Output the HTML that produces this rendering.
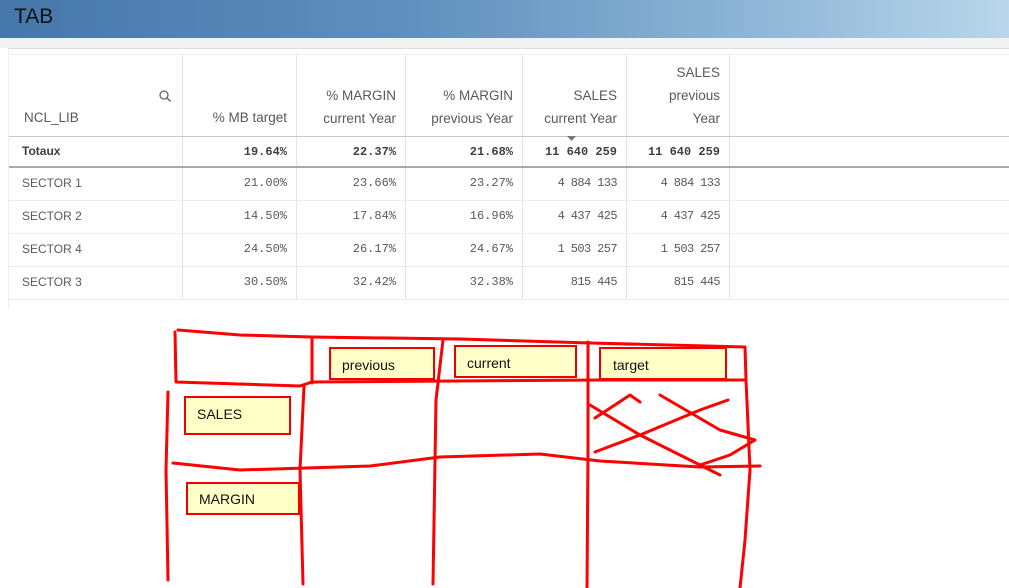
<!DOCTYPE html>
<html><head><meta charset="utf-8"><style>
body{margin:0;width:1009px;height:588px;overflow:hidden;background:#fff;font-family:"Liberation Sans",sans-serif;position:relative}
.top{position:absolute;left:0;top:0;width:1009px;height:38px;background:linear-gradient(90deg,#4677aa 0%,#5f8fbd 40%,#8fb6d6 75%,#b9d6ea 100%)}
.top span{position:absolute;left:14px;top:5px;font-size:21px;color:#111}
.band{position:absolute;left:0;top:38px;width:1009px;height:10px;background:#f2f2f2}
.panel{position:absolute;left:8px;top:48px;width:1001px;height:260px;background:#fff;border-top:1px solid #ddd;border-left:1px solid #eee}
.c{position:absolute;color:#595959;font-size:13.5px}
.m{font-family:"Liberation Mono",monospace;font-size:12px;color:#595959}
.b{font-weight:bold;color:#404040}
.vl{position:absolute;width:1px;background:#e4e4e4;top:54px;height:245px}
.hl{position:absolute;left:9px;width:1000px;height:1px;background:#ececec}
.rows{position:absolute;top:167px;line-height:33px;text-align:right}
</style></head><body>
<div class="top"><span>TAB</span></div>
<div class="band"></div>
<div class="panel"></div>
<div class="hl" style="top:54px;background:#f0f0f0"></div>
<div class="vl" style="left:182px"></div><div class="vl" style="left:296px"></div><div class="vl" style="left:405px"></div><div class="vl" style="left:522px"></div><div class="vl" style="left:626px"></div><div class="vl" style="left:729px"></div>
<div class="hl" style="top:136px;background:#c8c8c8"></div>
<div class="hl" style="top:166px;height:2px;background:#a8a8a8"></div>
<div class="hl" style="top:200px"></div><div class="hl" style="top:233px"></div><div class="hl" style="top:266px"></div><div class="hl" style="top:299px"></div>
<svg style="position:absolute;left:158px;top:89px" width="14" height="14"><circle cx="6" cy="6" r="4" fill="none" stroke="#666" stroke-width="1.3"/><line x1="9" y1="9" x2="12.5" y2="12.5" stroke="#666" stroke-width="1.5"/></svg>
<div class="c" style="left:24px;top:110px">NCL_LIB</div>
<div class="c" style="right:722px;top:110px">% MB target</div>
<div class="c" style="right:613px;top:84px;text-align:right;line-height:23px">% MARGIN<br>current Year</div>
<div class="c" style="right:496px;top:84px;text-align:right;line-height:23px">% MARGIN<br>previous Year</div>
<div class="c" style="right:392px;top:84px;text-align:right;line-height:23px">SALES<br>current Year</div>
<div class="c" style="right:289px;top:61px;text-align:right;line-height:23px">SALES<br>previous<br>Year</div>
<svg style="position:absolute;left:567px;top:136px" width="10" height="6"><path d="M0 0H9L4.5 5Z" fill="#777"/></svg>
<div class="c b" style="left:22px;top:144px;font-size:12px">Totaux</div>
<div class="m b" style="position:absolute;right:722px;top:145px">19.64%</div>
<div class="m b" style="position:absolute;right:613px;top:145px">22.37%</div>
<div class="m b" style="position:absolute;right:496px;top:145px">21.68%</div>
<div class="m b" style="position:absolute;right:392px;top:145px">11 640 259</div>
<div class="m b" style="position:absolute;right:289px;top:145px">11 640 259</div>
<div class="rows" style="left:22px;font-size:12px;color:#595959;text-align:left">SECTOR 1<br>SECTOR 2<br>SECTOR 4<br>SECTOR 3</div>
<div class="m rows" style="right:722px">21.00%<br>14.50%<br>24.50%<br>30.50%</div>
<div class="m rows" style="right:613px">23.66%<br>17.84%<br>26.17%<br>32.42%</div>
<div class="m rows" style="right:496px">23.27%<br>16.96%<br>24.67%<br>32.38%</div>
<div class="m rows" style="right:392px;letter-spacing:-0.6px">4 884 133<br>4 437 425<br>1 503 257<br>815 445</div>
<div class="m rows" style="right:289px;letter-spacing:-0.6px">4 884 133<br>4 437 425<br>1 503 257<br>815 445</div>
<svg style="position:absolute;left:0;top:0" width="1009" height="588">
<g fill="#ffffc8" stroke="#e00" stroke-width="2">
<rect x="330" y="348" width="104" height="31"/><rect x="455" y="346" width="121" height="31"/><rect x="600" y="348" width="126" height="31"/>
<rect x="185" y="397" width="105" height="37"/><rect x="187" y="483" width="112" height="31"/></g>
<g font-family="Liberation Sans,sans-serif" font-size="14" fill="#111">
<text x="342" y="370">previous</text><text x="467" y="368">current</text><text x="613" y="370">target</text>
<text x="197" y="419">SALES</text><text x="199" y="504">MARGIN</text></g>
<g fill="none" stroke="#f00" stroke-width="3" stroke-linecap="round" stroke-linejoin="round">
<path d="M178 330L240 335L312 337L460 339L590 343L745 347L746 380L600 380L312 382L300 386L176 382L175 332"/>
<path d="M312 337L312 383"/>
<path d="M168 392L166 470L168 580"/>
<path d="M304 386L300 470L303 584"/>
<path d="M443 340L436 400L433 584"/>
<path d="M588 342L588 450L587 588"/>
<path d="M746 380L750 470L745 540L740 588"/>
<path d="M173 463L240 470L370 466L440 457L540 454L600 461L700 467L760 466"/>
<path d="M595 418L630 395L640 402M590 405L640 435L720 475M595 452L640 435L700 410L728 400M660 395L720 430L755 440L730 455L700 465"/>
</g></svg>
</body></html>
